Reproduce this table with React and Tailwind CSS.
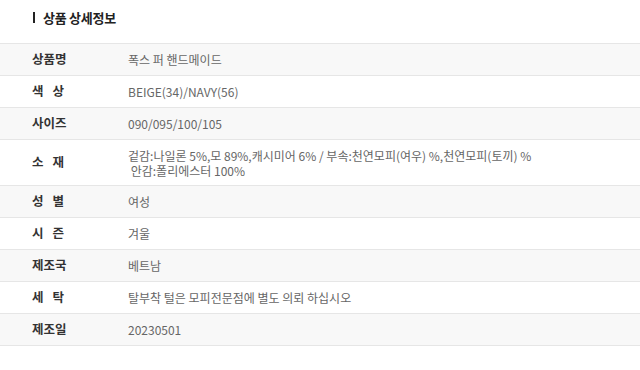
const rows = [
  { label: '상품명', value: '폭스 퍼 핸드메이드' },
  { label: '색 상', value: 'BEIGE(34)/NAVY(56)' },
  { label: '사이즈', value: '090/095/100/105' },
  {
    label: '소 재',
    value: ['겉감:나일론 5%,모 89%,캐시미어 6% / 부속:천연모피(여우) %,천연모피(토끼) %', ' 안감:폴리에스터 100%'],
  },
  { label: '성 별', value: '여성' },
  { label: '시 즌', value: '겨울' },
  { label: '제조국', value: '베트남' },
  { label: '세 탁', value: '탈부착 털은 모피전문점에 별도 의뢰 하십시오' },
  { label: '제조일', value: '20230501' },
]

export default function App() {
  return (
    <div
      className="w-[640px] h-[370px] bg-white overflow-hidden"
      style={{ fontFamily: '"Noto Sans CJK KR", "Noto Sans", sans-serif' }}
    >
      {/* Title */}
      <div className="h-[43px] pl-[33px] pt-[9px] flex items-start">
        <div className="flex items-center h-[17px] gap-[8px]">
          <span className="w-[2px] h-[11px] bg-[#222]" />
          <span className="text-[13px] font-bold text-[#222] tracking-[-0.02em]">상품 상세정보</span>
        </div>
      </div>

      {/* Info table */}
      <div className="border-t border-[#e6e6e6]">
        {rows.map((r, i) => (
          <div
            key={i}
            className={
              'flex items-center border-b border-[#e6e6e6] ' +
              (i % 2 === 0 ? 'bg-[#f8f8f8] ' : 'bg-white ') +
              (Array.isArray(r.value) ? 'h-[46px]' : 'h-[32px]')
            }
          >
            <div className="w-[128px] pl-[32px] flex gap-[9px] text-[12.5px] font-bold text-[#333]">
              {r.label.split(' ').map((p, j) => <span key={j}>{p}</span>)}
            </div>
            <div className="text-[12px] text-[#666] leading-[15px]">
              {Array.isArray(r.value) ? r.value.map((v, j) => <div key={j} className="whitespace-pre">{v}</div>) : r.value}
            </div>
          </div>
        ))}
      </div>
    </div>
  )
}
